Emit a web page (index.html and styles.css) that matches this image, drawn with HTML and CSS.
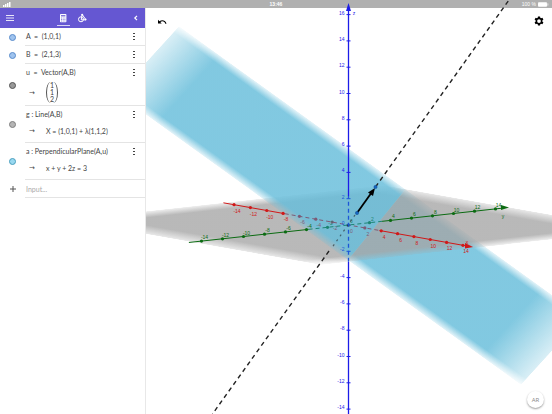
FILE: index.html
```
<!DOCTYPE html>
<html lang="en">
<head>
    <meta charset="UTF-8">
    <title>3D Calculator</title>
    <link rel="stylesheet" href="styles.css">
</head>
<body>
    <header class="status-bar">
        <svg class="signal" viewBox="0 0 8 5"><path d="M0 3h1.5v2H0zM2 2h1.5v3H2zM4 1h1.5v4H4zM6 0h1.5v5H6z"/></svg>
        <span class="clock">13:46</span>
        <span class="power">100 % <svg class="battery" viewBox="0 0 11 5"><rect width="9" height="4" y=".5" rx="1"/><path d="M10 1.5v2"/></svg></span>
    </header>

    <div class="workspace">
        <aside class="panel">
            <nav class="toolbar">
                <button class="tool" aria-label="Menu"><svg viewBox="0 0 10 10"><path d="M1 2.5h8M1 5h8M1 7.5h8" stroke="#fff" opacity=".85"/></svg></button>
                <div class="tabs">
                    <button class="tool active" aria-label="Algebra"><svg viewBox="0 0 10 10"><rect x="2" y="1" width="6.4" height="8.2" rx=".8" fill="#fff"/><path d="M3 2.8h4.4" stroke="#6557d2" stroke-width="1.2"/><path d="M3 5h4.4M3 6.5h4.4M3 8h4.4" stroke="#6557d2" stroke-width=".7" stroke-dasharray="1 .7"/></svg></button>
                    <button class="tool" aria-label="Tools"><svg viewBox="0 0 10 10"><g fill="none" stroke="#fff"><circle cx="4" cy="6.3" r="2.5"/><path d="M5.2 1.4L8.9 6.8H4.2z"/></g><circle cx="5.2" cy="1.8" r="1" fill="#fff"/><circle cx="8.5" cy="6.5" r="1" fill="#fff"/></svg></button>
                </div>
                <button class="tool" aria-label="Close panel"><svg viewBox="0 0 10 10"><path d="M6 2.8L3.8 5 6 7.2" fill="none" stroke="#fff" stroke-width="1.2"/></svg></button>
            </nav>

            <div class="row">
                <button class="dot blue" aria-label="Toggle A"></button>
                <div class="cell"><div class="line">A&nbsp; =&nbsp; (1,0,1)<button class="more" aria-label="More"></button></div></div>
            </div>
            <div class="row">
                <button class="dot blue" aria-label="Toggle B"></button>
                <div class="cell"><div class="line">B&nbsp; =&nbsp; (2,1,3)<button class="more" aria-label="More"></button></div></div>
            </div>
            <div class="row">
                <button class="dot dark" aria-label="Toggle u"></button>
                <div class="cell">
                    <div class="line">u&nbsp; =&nbsp; Vector(A,B)<button class="more" aria-label="More"></button></div>
                    <div class="result tall"><span class="arrow">→</span><span class="vector"><span>1</span><span>1</span><span>2</span></span></div>
                </div>
            </div>
            <div class="row">
                <button class="dot gray" aria-label="Toggle g"></button>
                <div class="cell">
                    <div class="line">g : Line(A,B)<button class="more" aria-label="More"></button></div>
                    <div class="result"><span class="arrow">→</span>X = (1,0,1) + λ(1,1,2)</div>
                </div>
            </div>
            <div class="row">
                <button class="dot cyan" aria-label="Toggle a"></button>
                <div class="cell">
                    <div class="line">a : PerpendicularPlane(A,u)<button class="more" aria-label="More"></button></div>
                    <div class="result"><span class="arrow">→</span>x + y + 2z = 3</div>
                </div>
            </div>
            <div class="row">
                <label class="plus" for="expr" aria-label="New expression"><svg viewBox="0 0 8 8"><path d="M4 1v6M1 4h6" stroke="#555"/></svg></label>
                <div class="cell"><input class="expr" id="expr" type="text" placeholder="Input..."></div>
            </div>
        </aside>

        <main class="view">
            <svg class="scene" viewBox="146 8 406 406" preserveAspectRatio="xMidYMid slice">
                <defs>
                    <linearGradient id="fadeU">
                        <stop offset="0" stop-color="#fff" stop-opacity=".3"/>
                        <stop offset=".1" stop-color="#fff"/>
                        <stop offset=".9" stop-color="#fff"/>
                        <stop offset="1" stop-color="#fff" stop-opacity=".3"/>
                    </linearGradient>
                    <linearGradient id="blueV" x2="0" y2="1">
                        <stop offset="0" stop-color="#68bedb" stop-opacity=".15"/>
                        <stop offset=".09" stop-color="#68bedb" stop-opacity=".83"/>
                        <stop offset=".91" stop-color="#68bedb" stop-opacity=".83"/>
                        <stop offset="1" stop-color="#68bedb" stop-opacity=".15"/>
                    </linearGradient>
                    <linearGradient id="grayV" x2="0" y2="1">
                        <stop offset="0" stop-color="#a5a5a5" stop-opacity=".15"/>
                        <stop offset=".09" stop-color="#a5a5a5" stop-opacity=".78"/>
                        <stop offset=".91" stop-color="#a5a5a5" stop-opacity=".78"/>
                        <stop offset="1" stop-color="#a5a5a5" stop-opacity=".15"/>
                    </linearGradient>
                    <mask id="fade" maskUnits="userSpaceOnUse" x="0" y="0" width="1" height="1">
                        <rect width="1" height="1" fill="url(#fadeU)"/>
                    </mask>
                    <clipPath id="front"><path d="M0-40H592L348 260 300 414H0z"/></clipPath>
                    <clipPath id="back"><path d="M592-40L348 260 300 414H640V-40z"/></clipPath>
                    <g id="bluePlane"><g transform="matrix(404 291 -62 68 179 26)"><rect width="1" height="1" fill="url(#blueV)" mask="url(#fade)"/></g></g>
                </defs>

                <!-- planes, back to front -->
                <g clip-path="url(#back)"><use href="#bluePlane"/></g>
                <g transform="matrix(317 -35 255 45 66 220)"><rect width="1" height="1" fill="url(#grayV)" mask="url(#fade)"/></g>
                <g clip-path="url(#front)"><use href="#bluePlane"/></g>

                <g id="axes"></g>

                <!-- line g and vector u -->
                <g stroke="#222" stroke-width="1.4" fill="none">
                    <path d="M375.5 187L509 0" stroke-dasharray="4.4 3.6"/>
                    <path d="M329 251L212.5 414" stroke-dasharray="4.4 3.6"/>
                    <path d="M355 215L331 249" stroke-width="1.2" stroke-dasharray="2 4" opacity=".6"/>
                </g>
                <path d="M357 213L372 192" stroke="#000" stroke-width="1.8"/>
                <path d="M375 188L368 192.5 373 196z"/>
                <g fill="#1565c0" stroke="#124a88" stroke-width=".4">
                    <circle cx="357" cy="213" r="1.7"/>
                    <circle cx="375.5" cy="187" r="1.7"/>
                </g>
            </svg>

            <button class="float undo" aria-label="Undo"><svg viewBox="0 0 10 6"><path d="M1 .8v3.7h3.7L3.3 3.1C5.3 1.7 7.6 2.3 8.5 5l1-.4C8.2 1.1 5.1.5 2.5 2.3z"/></svg></button>
            <button class="float settings" aria-label="Settings"><svg viewBox="0 0 24 24"><path fill-rule="evenodd" d="M9.5 1h5l.6 3.3 1.800 1 3.200-1.200 2.500 4.300-2.600 2.200v2.800l2.600 2.200-2.500 4.300-3.200-1.200-1.800 1-.6 3.300h-5l-.6-3.300-1.800-1-3.200 1.200-2.500-4.300L4 13.400v-2.800L1.400 8.400l2.500-4.300 3.200 1.200 1.800-1zM12 7.500a4.500 4.500 0 1 0 0 9 4.500 4.500 0 0 0 0-9z"/></svg></button>
            <button class="float ar">AR</button>
        </main>
    </div>

<script src="axes.js"></script>
</body>
</html>
```

FILE: styles.css
```
:root {
    --purple: #6557d2;
    --line: #e4e4e4;
}

* {
    box-sizing: border-box;
}

body {
    margin: 0;
    height: 100vh;
    display: flex;
    flex-direction: column;
    overflow: hidden;
    background: #fff;
    color: #444;
    font: 7px/10px Lato, "Open Sans", sans-serif;
}

button {
    border: 0;
    padding: 0;
    background: none;
    cursor: pointer;
}

svg {
    display: block;
}

.status-bar {
    display: grid;
    grid-template-columns: 1fr auto 1fr;
    align-items: center;
    height: 8px;
    padding: 0 3px;
    background: #b0b0b0;
    color: #fff;
    font: 5px/8px "Liberation Sans", sans-serif;
}

.signal {
    width: 8px;
    height: 5px;
    fill: #fff;
}

.clock {
    font-weight: bold;
}

.power {
    display: flex;
    justify-content: flex-end;
    align-items: center;
    gap: 2px;
}

.battery {
    width: 11px;
    height: 5px;
    fill: #fff;
    stroke: #fff;
    stroke-width: 0.5;
}

.workspace {
    flex: 1;
    min-height: 0;
    display: flex;
}

.panel {
    flex: 0 0 146px;
    z-index: 1;
    background: #fff;
    border-right: 1px solid #e8e8e8;
}

.toolbar {
    display: flex;
    justify-content: space-between;
    height: 20px;
    padding: 0 3px;
    background: var(--purple);
}

.tabs {
    display: flex;
    gap: 6px;
}

.tool {
    width: 13px;
    height: 18px;
    display: grid;
    place-items: center;
    padding-top: 2px;
    border-bottom: 1px solid transparent;
}

.tool svg {
    width: 10px;
    height: 10px;
}

.toolbar > .tool {
    height: 20px;
    padding-top: 0;
}

.tool.active {
    border-color: #d8d4f5;
}

.row {
    display: grid;
    grid-template-columns: 25px 1fr;
    align-items: center;
}

.cell {
    border-bottom: 1px solid var(--line);
    padding-left: 1px;
}

.line {
    display: flex;
    justify-content: space-between;
    align-items: center;
    height: 17px;
    padding: 0 10px 1px 0;
}

.dot {
    justify-self: center;
    width: 7px;
    height: 7px;
    border: 1px solid;
    border-radius: 50%;
}

.blue {
    background: #9fc3ee;
    border-color: #5a8ccc;
}

.dark {
    background: #999;
    border-color: #555;
}

.gray {
    background: #b5b5b5;
    border-color: #808080;
}

.cyan {
    background: #98d8f0;
    border-color: #4a9fbe;
}

.more {
    width: 2px;
    height: 8px;
    background: radial-gradient(circle, #444 0 1px, transparent 1px) 0 0 / 2px 3px;
}

.result {
    display: flex;
    align-items: center;
    height: 19px;
    padding-bottom: 3px;
}

.result.tall {
    height: 24px;
    padding-bottom: 1px;
}

.arrow {
    width: 20px;
    padding-left: 3px;
    font-family: "DejaVu Sans", sans-serif;
}

.vector {
    display: grid;
    justify-items: center;
    width: 12px;
    border: 1px solid #555;
    border-width: 0 1px;
    border-radius: 5px / 11px;
    line-height: 7px;
}

.plus {
    justify-self: center;
}

.plus svg {
    width: 8px;
    height: 8px;
}

.expr {
    display: block;
    width: 100%;
    height: 17px;
    border: 0;
    padding: 0;
    outline: 0;
    background: none;
    color: #444;
    font: inherit;
}

.expr::placeholder {
    color: #aaa;
}

.view {
    flex: 1;
    min-width: 0;
    position: relative;
}

.scene {
    width: 100%;
    height: 100%;
    overflow: visible;
}

.scene text {
    font: 5px "Liberation Sans", sans-serif;
    text-anchor: middle;
}

.float {
    position: absolute;
}

.undo {
    top: 11px;
    left: 11px;
    width: 10px;
}

.settings {
    top: 8px;
    right: 8px;
    width: 10px;
}

.ar {
    right: 8px;
    bottom: 6px;
    width: 17px;
    height: 17px;
    border-radius: 50%;
    background: #fff;
    color: #888;
    font: 6px "Open Sans", sans-serif;
    box-shadow: 0 1px 2px #0006;
}
```

FILE: axes.js
```
const axes = document.getElementById('axes');
const origin = [348.5, 225];

function add(name, attrs, text) {
    const el = document.createElementNS('http://www.w3.org/2000/svg', name);
    for (const key in attrs) el.setAttribute(key, attrs[key]);
    if (text !== undefined) el.textContent = text;
    axes.appendChild(el);
}

// point on an axis, n steps (of 2 units) away from the origin
function at(axis, n) {
    return [origin[0] + axis.step[0] * n, origin[1] + axis.step[1] * n];
}

function segment(axis, from, to, dashed) {
    const a = at(axis, from), b = at(axis, to);
    add('path', {
        d: `M${a}L${b}`,
        stroke: dashed ? axis.faded : axis.color,
        'stroke-width': axis.width,
        'stroke-dasharray': dashed ? '4 3' : 'none'
    });
}

// hidden: the part that lies behind a plane
const x = { step: [16.35, 2.9], color: '#d01818', faded: '#7d5a76', width: 1, range: [-7.65, 7.3], hidden: [-3.9, 1.9], label: [3, 8] };
const y = { step: [21, -2.3], color: '#0b6b12', faded: '#1d8573', width: 1, range: [-7.6, 7.3], hidden: [-1.9, 1.6], label: [3, -2] };
const z = { step: [0, -26.3], color: '#1c1ce8', faded: '#1c56d8', width: 1.3, range: [-7.2, 8.2], hidden: [-1.4, 1.1], label: [-4, 0] };

for (const axis of [x, y, z]) {
    segment(axis, axis.range[0], axis.hidden[0]);
    segment(axis, axis.hidden[0], axis.hidden[1], true);
    segment(axis, axis.hidden[1], axis.range[1]);

    for (let n = -7; n <= (axis === z ? 8 : 7); n++) {
        const [px, py] = at(axis, n);
        const inside = n > axis.hidden[0] && n < axis.hidden[1];
        const color = inside ? axis.faded : axis.color;
        if (axis === z) {
            add('path', { d: `M${px - 2} ${py}h4`, stroke: color, 'stroke-width': 1 });
        } else {
            add('circle', { cx: px, cy: py, r: 1.6, fill: color });
        }
        add('text', {
            x: px + axis.label[0], y: py + axis.label[1], fill: color,
            style: axis === z ? 'text-anchor: end' : ''
        }, n * 2);
    }
}

// arrow heads and axis names
add('path', { d: 'M473 247L465 243V248.5z', fill: x.color });
add('path', { d: 'M509 207.5L501 205V210z', fill: y.color });
add('path', { d: 'M348.5 3L346 11H351z', fill: z.color });
add('text', { x: 467, y: 244, fill: x.color }, 'x');
add('text', { x: 503, y: 218, fill: y.color }, 'y');
add('text', { x: 354, y: 15, fill: z.color }, 'z');
```
